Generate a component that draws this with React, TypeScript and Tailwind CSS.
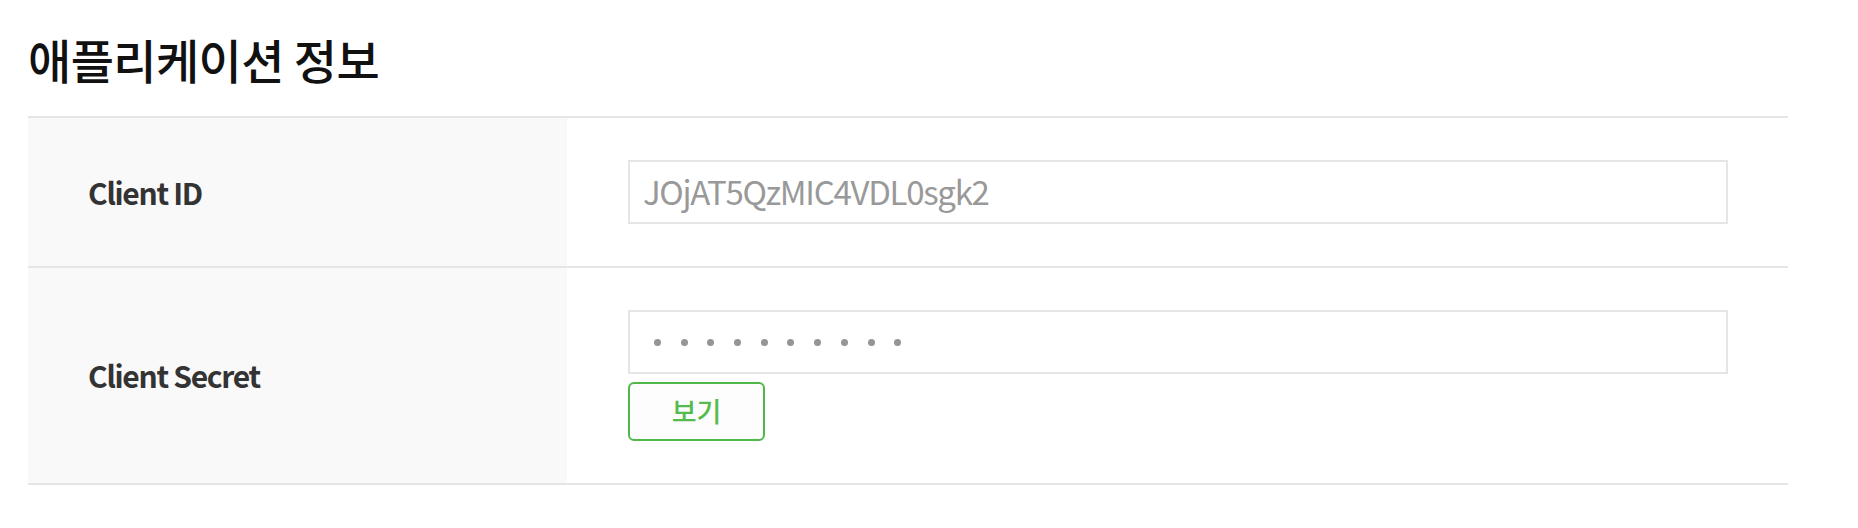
const FONT = "font-['Noto_Sans_CJK_KR','Noto_Sans',sans-serif]";

function Row({ label, children }: { label: string; children: React.ReactNode }) {
  return (
    <div className="grid grid-cols-[539px_1fr] border-b-2 border-[#e5e5e5]">
      <div className="flex items-center bg-[#f9f9f9] pl-[60px]">
        <span className="text-[30px] font-semibold tracking-[-1.3px] text-[#333]">{label}</span>
      </div>
      <div className="pl-[61px] py-[42px]">{children}</div>
    </div>
  );
}

export default function App() {
  const dots = Array.from({ length: 10 });

  return (
    <div className={`${FONT} h-[528px] w-full bg-white`}>
      <div className="ml-[28px] w-[1760px]">
        <h1 className="flex h-[116px] items-center text-[47px] font-medium leading-none tracking-[-0.6px] text-[#111]">
          애플리케이션 정보
        </h1>
        <div className="border-t-2 border-[#e5e5e5]">
          <Row label="Client ID">
            <div className="flex h-[64px] w-[1100px] items-center border-2 border-[#e5e5e5] bg-white px-[13px]">
              <span className="text-[33px] tracking-[-1.3px] text-[#999]">JOjAT5QzMIC4VDL0sgk2</span>
            </div>
          </Row>
          <Row label="Client Secret">
            <div className="flex flex-col items-start gap-[8px]">
              <div className="flex h-[64px] w-[1100px] items-center gap-[19.7px] border-2 border-[#e5e5e5] bg-white pl-[24px]">
                {dots.map((_, i) => (
                  <span key={i} className="h-[7px] w-[7px] rounded-full bg-[#959595]" />
                ))}
              </div>
              <button className="flex h-[59px] w-[137px] items-center justify-center rounded-[6px] border-2 border-[#4fb848] bg-[#fdfdfd] text-[27px] font-medium text-[#55bb4c]">
                보기
              </button>
            </div>
          </Row>
        </div>
      </div>
    </div>
  );
}
